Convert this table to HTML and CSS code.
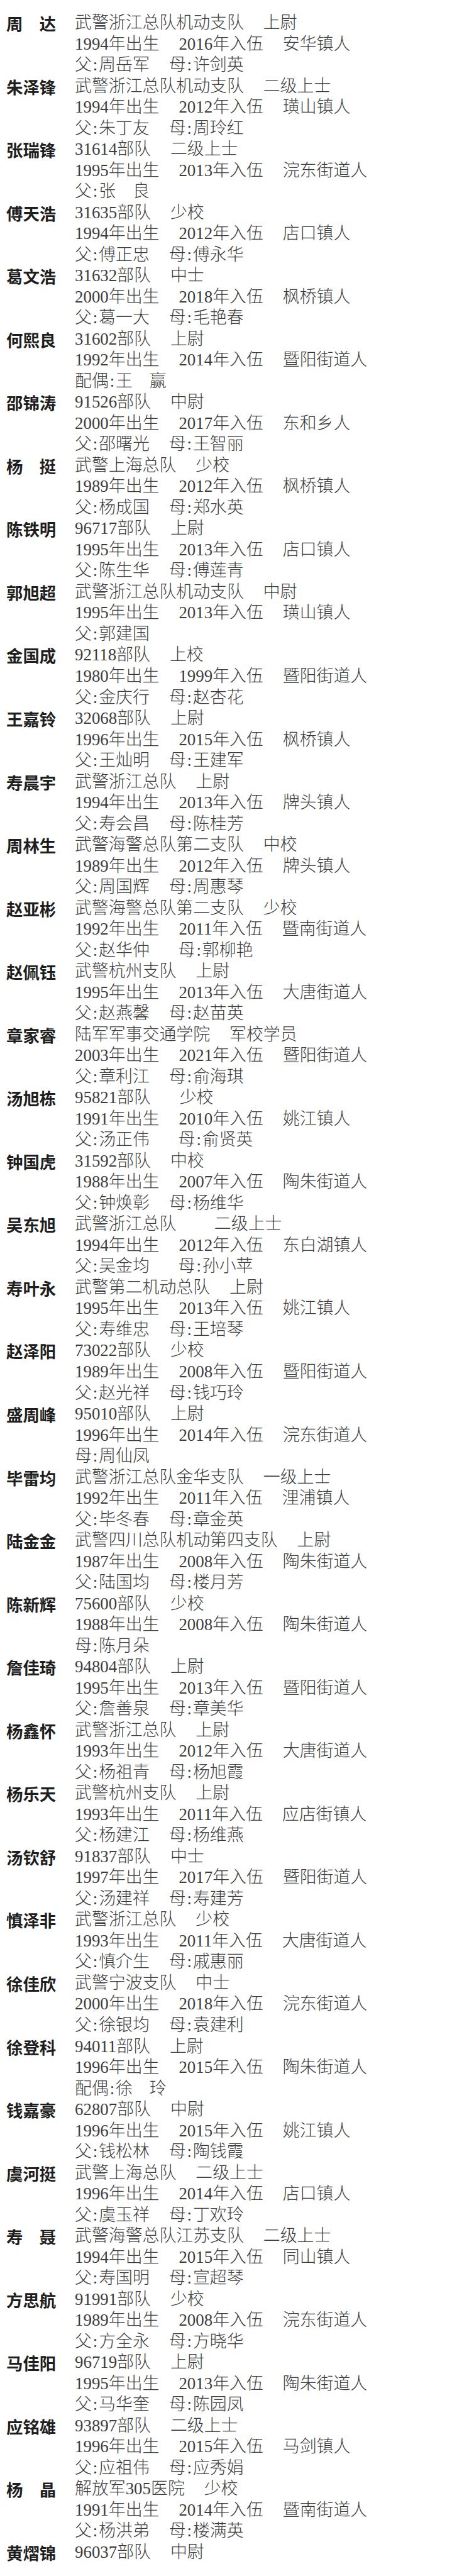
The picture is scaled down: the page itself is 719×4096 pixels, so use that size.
FILE: index.html
```html
<!DOCTYPE html>
<html lang="zh-CN">
<head>
<meta charset="utf-8">
<title>名单</title>
<link rel="stylesheet" href="styles.css">
</head>
<body>
<div class="list">
  <div class="entry"><div class="nm nm2"><span>周</span><span>达</span></div><div class="info">
    <div class="ln">武警浙江总队机动支队<span class="g"></span>上尉</div>
    <div class="ln">1994年出生<span class="g"></span>2016年入伍<span class="g"></span>安华镇人</div>
    <div class="ln">父<span class="c">:</span>周岳军<span class="g"></span>母<span class="c">:</span>许剑英</div>
  </div></div>
  <div class="entry"><div class="nm">朱泽锋</div><div class="info">
    <div class="ln">武警浙江总队机动支队<span class="g"></span>二级上士</div>
    <div class="ln">1994年出生<span class="g"></span>2012年入伍<span class="g"></span>璜山镇人</div>
    <div class="ln">父<span class="c">:</span>朱丁友<span class="g"></span>母<span class="c">:</span>周玲红</div>
  </div></div>
  <div class="entry"><div class="nm">张瑞锋</div><div class="info">
    <div class="ln">31614部队<span class="g"></span>二级上士</div>
    <div class="ln">1995年出生<span class="g"></span>2013年入伍<span class="g"></span>浣东街道人</div>
    <div class="ln">父<span class="c">:</span>张<span class="s"></span>良</div>
  </div></div>
  <div class="entry"><div class="nm">傅天浩</div><div class="info">
    <div class="ln">31635部队<span class="g"></span>少校</div>
    <div class="ln">1994年出生<span class="g"></span>2012年入伍<span class="g"></span>店口镇人</div>
    <div class="ln">父<span class="c">:</span>傅正忠<span class="g"></span>母<span class="c">:</span>傅永华</div>
  </div></div>
  <div class="entry"><div class="nm">葛文浩</div><div class="info">
    <div class="ln">31632部队<span class="g"></span>中士</div>
    <div class="ln">2000年出生<span class="g"></span>2018年入伍<span class="g"></span>枫桥镇人</div>
    <div class="ln">父<span class="c">:</span>葛一大<span class="g"></span>母<span class="c">:</span>毛艳春</div>
  </div></div>
  <div class="entry"><div class="nm">何熙良</div><div class="info">
    <div class="ln">31602部队<span class="g"></span>上尉</div>
    <div class="ln">1992年出生<span class="g"></span>2014年入伍<span class="g"></span>暨阳街道人</div>
    <div class="ln">配偶<span class="c">:</span>王<span class="s"></span>赢</div>
  </div></div>
  <div class="entry"><div class="nm">邵锦涛</div><div class="info">
    <div class="ln">91526部队<span class="g"></span>中尉</div>
    <div class="ln">2000年出生<span class="g"></span>2017年入伍<span class="g"></span>东和乡人</div>
    <div class="ln">父<span class="c">:</span>邵曙光<span class="g"></span>母<span class="c">:</span>王智丽</div>
  </div></div>
  <div class="entry"><div class="nm nm2"><span>杨</span><span>挺</span></div><div class="info">
    <div class="ln">武警上海总队<span class="g"></span>少校</div>
    <div class="ln">1989年出生<span class="g"></span>2012年入伍<span class="g"></span>枫桥镇人</div>
    <div class="ln">父<span class="c">:</span>杨成国<span class="g"></span>母<span class="c">:</span>郑水英</div>
  </div></div>
  <div class="entry"><div class="nm">陈铁明</div><div class="info">
    <div class="ln">96717部队<span class="g"></span>上尉</div>
    <div class="ln">1995年出生<span class="g"></span>2013年入伍<span class="g"></span>店口镇人</div>
    <div class="ln">父<span class="c">:</span>陈生华<span class="g"></span>母<span class="c">:</span>傅莲青</div>
  </div></div>
  <div class="entry"><div class="nm">郭旭超</div><div class="info">
    <div class="ln">武警浙江总队机动支队<span class="g"></span>中尉</div>
    <div class="ln">1995年出生<span class="g"></span>2013年入伍<span class="g"></span>璜山镇人</div>
    <div class="ln">父<span class="c">:</span>郭建国</div>
  </div></div>
  <div class="entry"><div class="nm">金国成</div><div class="info">
    <div class="ln">92118部队<span class="g"></span>上校</div>
    <div class="ln">1980年出生<span class="g"></span>1999年入伍<span class="g"></span>暨阳街道人</div>
    <div class="ln">父<span class="c">:</span>金庆行<span class="g"></span>母<span class="c">:</span>赵杏花</div>
  </div></div>
  <div class="entry"><div class="nm">王嘉铃</div><div class="info">
    <div class="ln">32068部队<span class="g"></span>上尉</div>
    <div class="ln">1996年出生<span class="g"></span>2015年入伍<span class="g"></span>枫桥镇人</div>
    <div class="ln">父<span class="c">:</span>王灿明<span class="g"></span>母<span class="c">:</span>王建军</div>
  </div></div>
  <div class="entry"><div class="nm">寿晨宇</div><div class="info">
    <div class="ln">武警浙江总队<span class="g"></span>上尉</div>
    <div class="ln">1994年出生<span class="g"></span>2013年入伍<span class="g"></span>牌头镇人</div>
    <div class="ln">父<span class="c">:</span>寿会昌<span class="g"></span>母<span class="c">:</span>陈桂芳</div>
  </div></div>
  <div class="entry"><div class="nm">周林生</div><div class="info">
    <div class="ln">武警海警总队第二支队<span class="g"></span>中校</div>
    <div class="ln">1989年出生<span class="g"></span>2012年入伍<span class="g"></span>牌头镇人</div>
    <div class="ln">父<span class="c">:</span>周国辉<span class="g"></span>母<span class="c">:</span>周惠琴</div>
  </div></div>
  <div class="entry"><div class="nm">赵亚彬</div><div class="info">
    <div class="ln">武警海警总队第二支队<span class="g"></span>少校</div>
    <div class="ln">1992年出生<span class="g"></span>2011年入伍<span class="g"></span>暨南街道人</div>
    <div class="ln">父<span class="c">:</span>赵华仲<span class="g gw"></span>母<span class="c">:</span>郭柳艳</div>
  </div></div>
  <div class="entry"><div class="nm">赵佩钰</div><div class="info">
    <div class="ln">武警杭州支队<span class="g"></span>上尉</div>
    <div class="ln">1995年出生<span class="g"></span>2013年入伍<span class="g"></span>大唐街道人</div>
    <div class="ln">父<span class="c">:</span>赵燕馨<span class="g"></span>母<span class="c">:</span>赵苗英</div>
  </div></div>
  <div class="entry"><div class="nm">章家睿</div><div class="info">
    <div class="ln">陆军军事交通学院<span class="g"></span>军校学员</div>
    <div class="ln">2003年出生<span class="g"></span>2021年入伍<span class="g"></span>暨阳街道人</div>
    <div class="ln">父<span class="c">:</span>章利江<span class="g"></span>母<span class="c">:</span>俞海琪</div>
  </div></div>
  <div class="entry"><div class="nm">汤旭栋</div><div class="info">
    <div class="ln">95821部队<span class="g gw"></span>少校</div>
    <div class="ln">1991年出生<span class="g"></span>2010年入伍<span class="g"></span>姚江镇人</div>
    <div class="ln">父<span class="c">:</span>汤正伟<span class="g gw"></span>母<span class="c">:</span>俞贤英</div>
  </div></div>
  <div class="entry"><div class="nm">钟国虎</div><div class="info">
    <div class="ln">31592部队<span class="g"></span>中校</div>
    <div class="ln">1988年出生<span class="g"></span>2007年入伍<span class="g"></span>陶朱街道人</div>
    <div class="ln">父<span class="c">:</span>钟焕彰<span class="g"></span>母<span class="c">:</span>杨维华</div>
  </div></div>
  <div class="entry"><div class="nm">吴东旭</div><div class="info">
    <div class="ln">武警浙江总队<span class="g gxw"></span>二级上士</div>
    <div class="ln">1994年出生<span class="g"></span>2012年入伍<span class="g"></span>东白湖镇人</div>
    <div class="ln">父<span class="c">:</span>吴金均<span class="g gw"></span>母<span class="c">:</span>孙小苹</div>
  </div></div>
  <div class="entry"><div class="nm">寿叶永</div><div class="info">
    <div class="ln">武警第二机动总队<span class="g"></span>上尉</div>
    <div class="ln">1995年出生<span class="g"></span>2013年入伍<span class="g"></span>姚江镇人</div>
    <div class="ln">父<span class="c">:</span>寿维忠<span class="g"></span>母<span class="c">:</span>王培琴</div>
  </div></div>
  <div class="entry"><div class="nm">赵泽阳</div><div class="info">
    <div class="ln">73022部队<span class="g"></span>少校</div>
    <div class="ln">1989年出生<span class="g"></span>2008年入伍<span class="g"></span>暨阳街道人</div>
    <div class="ln">父<span class="c">:</span>赵光祥<span class="g"></span>母<span class="c">:</span>钱巧玲</div>
  </div></div>
  <div class="entry"><div class="nm">盛周峰</div><div class="info">
    <div class="ln">95010部队<span class="g"></span>上尉</div>
    <div class="ln">1996年出生<span class="g"></span>2014年入伍<span class="g"></span>浣东街道人</div>
    <div class="ln">母<span class="c">:</span>周仙凤</div>
  </div></div>
  <div class="entry"><div class="nm">毕雷均</div><div class="info">
    <div class="ln">武警浙江总队金华支队<span class="g"></span>一级上士</div>
    <div class="ln">1992年出生<span class="g"></span>2011年入伍<span class="g"></span>浬浦镇人</div>
    <div class="ln">父<span class="c">:</span>毕冬春<span class="g"></span>母<span class="c">:</span>章金英</div>
  </div></div>
  <div class="entry"><div class="nm">陆金金</div><div class="info">
    <div class="ln">武警四川总队机动第四支队<span class="g"></span>上尉</div>
    <div class="ln">1987年出生<span class="g"></span>2008年入伍<span class="g"></span>陶朱街道人</div>
    <div class="ln">父<span class="c">:</span>陆国均<span class="g"></span>母<span class="c">:</span>楼月芳</div>
  </div></div>
  <div class="entry"><div class="nm">陈新辉</div><div class="info">
    <div class="ln">75600部队<span class="g"></span>少校</div>
    <div class="ln">1988年出生<span class="g"></span>2008年入伍<span class="g"></span>陶朱街道人</div>
    <div class="ln">母<span class="c">:</span>陈月朵</div>
  </div></div>
  <div class="entry"><div class="nm">詹佳琦</div><div class="info">
    <div class="ln">94804部队<span class="g"></span>上尉</div>
    <div class="ln">1995年出生<span class="g"></span>2013年入伍<span class="g"></span>暨阳街道人</div>
    <div class="ln">父<span class="c">:</span>詹善泉<span class="g"></span>母<span class="c">:</span>章美华</div>
  </div></div>
  <div class="entry"><div class="nm">杨鑫怀</div><div class="info">
    <div class="ln">武警浙江总队<span class="g"></span>上尉</div>
    <div class="ln">1993年出生<span class="g"></span>2012年入伍<span class="g"></span>大唐街道人</div>
    <div class="ln">父<span class="c">:</span>杨祖青<span class="g"></span>母<span class="c">:</span>杨旭霞</div>
  </div></div>
  <div class="entry"><div class="nm">杨乐天</div><div class="info">
    <div class="ln">武警杭州支队<span class="g"></span>上尉</div>
    <div class="ln">1993年出生<span class="g"></span>2011年入伍<span class="g"></span>应店街镇人</div>
    <div class="ln">父<span class="c">:</span>杨建江<span class="g"></span>母<span class="c">:</span>杨维燕</div>
  </div></div>
  <div class="entry"><div class="nm">汤钦舒</div><div class="info">
    <div class="ln">91837部队<span class="g"></span>中士</div>
    <div class="ln">1997年出生<span class="g"></span>2017年入伍<span class="g"></span>暨阳街道人</div>
    <div class="ln">父<span class="c">:</span>汤建祥<span class="g"></span>母<span class="c">:</span>寿建芳</div>
  </div></div>
  <div class="entry"><div class="nm">慎泽非</div><div class="info">
    <div class="ln">武警浙江总队<span class="g"></span>少校</div>
    <div class="ln">1993年出生<span class="g"></span>2011年入伍<span class="g"></span>大唐街道人</div>
    <div class="ln">父<span class="c">:</span>慎介生<span class="g"></span>母<span class="c">:</span>戚惠丽</div>
  </div></div>
  <div class="entry"><div class="nm">徐佳欣</div><div class="info">
    <div class="ln">武警宁波支队<span class="g"></span>中士</div>
    <div class="ln">2000年出生<span class="g"></span>2018年入伍<span class="g"></span>浣东街道人</div>
    <div class="ln">父<span class="c">:</span>徐银均<span class="g"></span>母<span class="c">:</span>袁建利</div>
  </div></div>
  <div class="entry"><div class="nm">徐登科</div><div class="info">
    <div class="ln">94011部队<span class="g"></span>上尉</div>
    <div class="ln">1996年出生<span class="g"></span>2015年入伍<span class="g"></span>陶朱街道人</div>
    <div class="ln">配偶<span class="c">:</span>徐<span class="s"></span>玲</div>
  </div></div>
  <div class="entry"><div class="nm">钱嘉豪</div><div class="info">
    <div class="ln">62807部队<span class="g"></span>中尉</div>
    <div class="ln">1996年出生<span class="g"></span>2015年入伍<span class="g"></span>姚江镇人</div>
    <div class="ln">父<span class="c">:</span>钱松林<span class="g"></span>母<span class="c">:</span>陶钱霞</div>
  </div></div>
  <div class="entry"><div class="nm">虞河挺</div><div class="info">
    <div class="ln">武警上海总队<span class="g"></span>二级上士</div>
    <div class="ln">1996年出生<span class="g"></span>2014年入伍<span class="g"></span>店口镇人</div>
    <div class="ln">父<span class="c">:</span>虞玉祥<span class="g"></span>母<span class="c">:</span>丁欢玲</div>
  </div></div>
  <div class="entry"><div class="nm nm2"><span>寿</span><span>聂</span></div><div class="info">
    <div class="ln">武警海警总队江苏支队<span class="g"></span>二级上士</div>
    <div class="ln">1994年出生<span class="g"></span>2015年入伍<span class="g"></span>同山镇人</div>
    <div class="ln">父<span class="c">:</span>寿国明<span class="g"></span>母<span class="c">:</span>宣超琴</div>
  </div></div>
  <div class="entry"><div class="nm">方思航</div><div class="info">
    <div class="ln">91991部队<span class="g"></span>少校</div>
    <div class="ln">1989年出生<span class="g"></span>2008年入伍<span class="g"></span>浣东街道人</div>
    <div class="ln">父<span class="c">:</span>方全永<span class="g"></span>母<span class="c">:</span>方晓华</div>
  </div></div>
  <div class="entry"><div class="nm">马佳阳</div><div class="info">
    <div class="ln">96719部队<span class="g"></span>上尉</div>
    <div class="ln">1995年出生<span class="g"></span>2013年入伍<span class="g"></span>陶朱街道人</div>
    <div class="ln">父<span class="c">:</span>马华奎<span class="g"></span>母<span class="c">:</span>陈园凤</div>
  </div></div>
  <div class="entry"><div class="nm">应铭雄</div><div class="info">
    <div class="ln">93897部队<span class="g"></span>二级上士</div>
    <div class="ln">1996年出生<span class="g"></span>2015年入伍<span class="g"></span>马剑镇人</div>
    <div class="ln">父<span class="c">:</span>应祖伟<span class="g"></span>母<span class="c">:</span>应秀娟</div>
  </div></div>
  <div class="entry"><div class="nm nm2"><span>杨</span><span>晶</span></div><div class="info">
    <div class="ln">解放军305医院<span class="g"></span>少校</div>
    <div class="ln">1991年出生<span class="g"></span>2014年入伍<span class="g"></span>暨南街道人</div>
    <div class="ln">父<span class="c">:</span>杨洪弟<span class="g"></span>母<span class="c">:</span>楼满英</div>
  </div></div>
  <div class="entry"><div class="nm">黄熠锦</div><div class="info">
    <div class="ln">96037部队<span class="g"></span>中尉</div>
  </div></div>
</div>
</body>
</html>
```

FILE: styles.css
```css
html, body {
  margin: 0;
  padding: 0;
  background: #ffffff;
}

.list {
  padding: 20px 0 0 10px;
}

.entry {
  display: grid;
  grid-template-columns: 109px auto;
}

.nm {
  width: 3em;
  font-family: "Noto Sans CJK SC", sans-serif;
  font-weight: 700;
  font-size: 26.4px;
  line-height: 33.52px;
  height: 33.52px;
  color: #1e1e1e;
  white-space: nowrap;
}

.nm2 {
  display: flex;
  justify-content: space-between;
}

.info {
  font-family: "Liberation Serif", "Noto Sans CJK SC", serif;
  font-weight: 300;
  font-size: 26.9px;
  color: #3c3c3c;
}

.ln {
  height: 33.52px;
  line-height: 33.52px;
  white-space: nowrap;
}

.g {
  display: inline-block;
  width: 1.15em;
}

.gw {
  width: 1.7em;
}

.gxw {
  width: 2.25em;
}

.s {
  display: inline-block;
  width: 1em;
}

.c {
  display: inline-block;
  width: 0.42em;
  text-align: center;
}
```
